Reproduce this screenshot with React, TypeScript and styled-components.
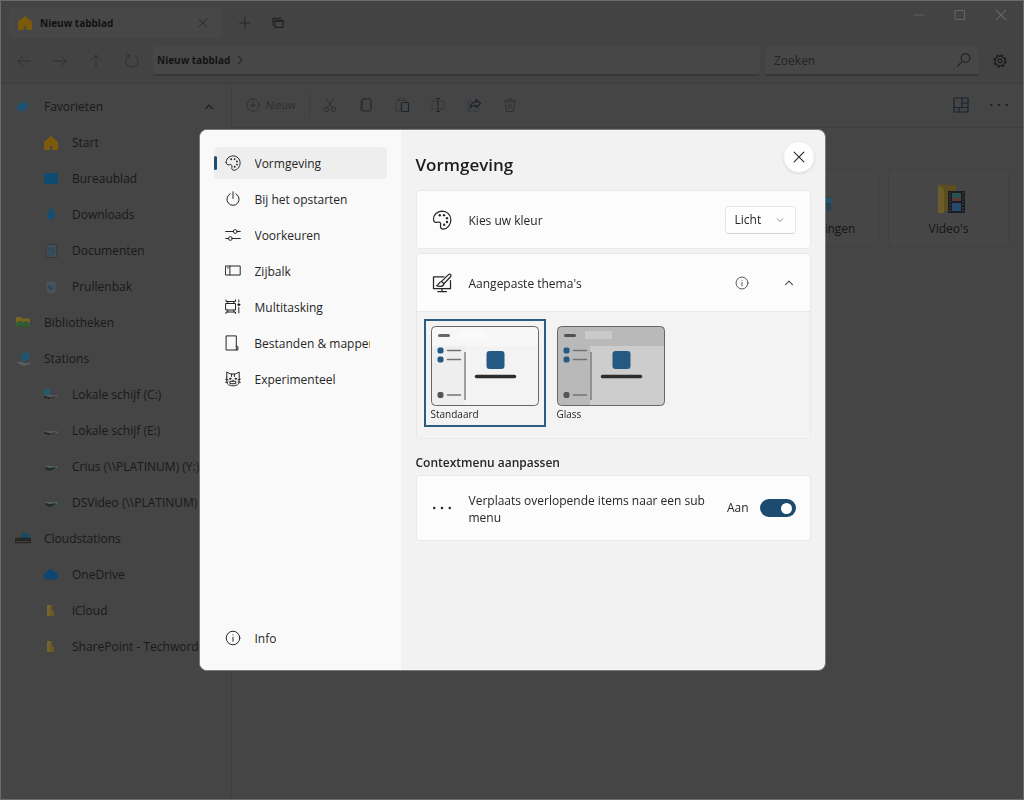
import React, { useState } from "react";
import styled, { createGlobalStyle } from "styled-components";

const GlobalStyle = createGlobalStyle`
  *, *::before, *::after { box-sizing: border-box; }
  body {
    margin: 0;
    background: #434343;
    color: #1c1c1c;
    font: 12px/18px "Open Sans", "Noto Sans", sans-serif;
  }
  button, input, select { font: inherit; color: inherit; }
  button { padding: 0; border: 0; background: none; }
  ul { margin: 0; padding: 0; list-style: none; }
  a { color: inherit; text-decoration: none; }
  svg { display: block; flex: none; }
`;

/* ---------- icons ---------- */

type IconProps = { size?: number; weight?: number; children: React.ReactNode };

const Line = ({ size = 16, weight = 1, children }: IconProps) => (
  <svg width={size} height={size} viewBox="0 0 16 16" fill="none" stroke="currentColor" strokeWidth={weight} strokeLinecap="round" strokeLinejoin="round" aria-hidden="true">
    {children}
  </svg>
);

const Art = ({ size = 16, children }: { size?: number; children: React.ReactNode }) => (
  <svg width={size} height={size} viewBox="0 0 16 16" aria-hidden="true">{children}</svg>
);

const Palette = ({ size }: { size?: number }) => (
  <Line size={size}>
    <path d="M1.2 7.600C.9 4.100 3.900 1 8 .9c4 0 7.100 3 7.100 6.900 0 3.900-2.700 7.400-6 7.400-1.600 0-2.500-.9-2.300-2.400.2-1.100.4-1.900-.1-2.600-.6-.9-1.500-.7-2.600-.4-1.600.4-2.700-.4-2.900-2.200Z" />
    <g fill="currentColor" stroke="none">
      <circle cx="6.200" cy="4.200" r=".95" /><circle cx="9.600" cy="4.100" r=".95" /><circle cx="12" cy="6.500" r=".95" />
      <circle cx="12" cy="9.600" r=".95" /><circle cx="9.700" cy="11.800" r=".95" />
    </g>
  </Line>
);
const Power = () => <Line><path d="M8 .8v6.700M5.200 2.800a6.100 6.100 0 1 0 5.600 0" /></Line>;
const Sliders = () => (
  <Line><path d="M.7 4.500h7.700M12.200 4.500h3.100M.7 11.500h2.800M7.300 11.500h8" /><circle cx="10.300" cy="4.500" r="1.900" /><circle cx="5.400" cy="11.500" r="1.900" /></Line>
);
const SidebarIcon = () => <Line><path d="M.8 3h14.400v9H.8zM4.900 3v9M2.500 4.900h.8" /></Line>;
const Multitask = () => (
  <Line><path d="M1 1v1.500h9.500V1M1 14.500V13h9.500v1.500M1 4.500h9.500v6.500H1zM13.800 1v2M13.800 8.500v5.500M2.800 2.500v2M8.800 2.500v2M2.800 11v2M8.800 11v2" /><circle cx="13.800" cy="5.700" r="1" fill="currentColor" /></Line>
);
const FileIcon = () => <Line><path d="M2.500.9h9.800v9.600l1.600 1.200v3.300H2.500zM12.300 10.500v4.300" /></Line>;
const Cat = () => (
  <Line>
    <path d="M1.800 6V1l3.700 2h5l3.700-2v9.500c0 2.700-2.200 4.300-6.200 4.300s-6.200-1.600-6.200-4.300V6M.7 8.300l2.300.5M.7 11.300l2.300-.3M15.300 8.300l-2.300.5M15.300 11.300l-2.300-.3M6.600 3v2.500M9.400 3v2.500M5.300 10.300h5.400v2.400H5.300zM8 9v1.300" />
    <circle cx="5.200" cy="7.700" r=".7" fill="currentColor" /><circle cx="10.800" cy="7.700" r=".7" fill="currentColor" />
  </Line>
);
const Info = ({ size }: { size?: number }) => <Line size={size}><circle cx="8" cy="8" r="6.800" /><path d="M8 7.300v3.900M8 4.900v.1" /></Line>;
const Close = ({ size = 12 }) => <Line size={size} weight={1.500}><path d="m1.500 1.500 13 13M14.500 1.500l-13 13" /></Line>;
const ChevronUp = ({ size = 10 }) => <Line size={size} weight={1.700}><path d="m2.500 10.500 5.500-5.500 5.500 5.500" /></Line>;
const Gear = () => (
  <Line size={14} weight={1.300}>
    <circle cx="8" cy="8" r="5.600" /><circle cx="8" cy="8" r="2.200" />
    <circle cx="8" cy="8" r="6.700" strokeWidth="1.700" strokeLinecap="butt" strokeDasharray="2.900 2.362" />
  </Line>
);
const Dots = ({ size = 18 }) => (
  <Art size={size}><g fill="currentColor"><circle cx="1.800" cy="8" r="1" /><circle cx="8" cy="8" r="1" /><circle cx="14.200" cy="8" r="1" /></g></Art>
);
const ScreenBrush = () => (
  <Line size={20}><path d="M9.500 3H1.200v9.500h13.600V6M8 12.500v2.300M4.700 14.900h6.800M14.900 1.300c-.7-.7-1.500-.2-2.100.4L7.600 6.700l1.900 1.900 5-5.200c.6-.6 1-1.400.4-2.100ZM7.400 7c-2.400.1-1.500 2.800-3.700 3 1.500 1.200 5.600 1.200 5.800-1.300" /></Line>
);
const House = () => <Art><path d="M8 1 1 6.800V14a1 1 0 0 0 1 1h4.800v-2.800a1.200 1.200 0 0 1 2.400 0V15H14a1 1 0 0 0 1-1V6.800Z" fill="#7b5b0a" /></Art>;
const Star = () => <Art><path d="m10.300 1.200-.1 4.400 4.600 1-4.300 1.900.4 4.600-3.300-2.900-4.800 3.100 1.500-4.800L.9 6.700l4.600-.9Z" fill="#17547a" /><path d="m1.500 4 3 1.500M1.500 10.500l3-1.500" stroke="#17547a" /></Art>;
const Desktop = () => <Art><rect x="1" y="2" width="14" height="11" rx=".8" fill="#0d4b70" /></Art>;
const Download = () => <Art><path d="M5.800 2h4.600v5.400h3L8 13.500 2.700 7.400h3.100Z" fill="#124f78" /></Art>;
const Doc = () => <Art><path d="M4.200 1.500h9.500v13H3V2.700Z" fill="#484d51" stroke="#34393e" /><path d="M5 5h2v3H5zm3 0h4M8.500 7H11v3H8.500zM5 10h2M5 12h6" fill="#24506d" stroke="#294b61" /></Art>;
const Bin = () => <Art><path d="M3 3.500 5 2l2 1 3-1.200 1 1.400 2-.5-1 11.500-7.500.3Z" fill="#4b5358" /><path d="m5 6 3 1-1 2 3-2v4H6l1-1-2-1" fill="#244960" /></Art>;
const Libraries = () => <Art><path d="M1 2h5l1 1.500h8v7H1z" fill="#75671f" /><path d="M2.500 6.500h5.200v6.300H2.500zM8.500 6.500h5v6.300h-5z" fill="#375332" /><path d="M1 8h14v2H1z" fill="#276040" /></Art>;
const Stations = () => <Art><path d="m5 3 8.800-1.700 1.400 7.200-8 2Z" fill="#24546f" /><path d="M.8 11.300 6 10.800l5 1.700 4-1.200v1.400L10 14.700H7.500Z" fill="#5c5e5e" /></Art>;
const Drive = ({ system = false }) => <Art><path d="m1 8.500 5-.4 9 .4v1.400l-8 2.600-6-1.700Z" fill="#575b59" /><path d="m1 8.800 6 1.500v2L1 10.700Z" fill="#222827" /><path d="m7 10.300 5.500-1.200V11L7 12.300Z" fill="#363b39" />{system && <path d="M1 2h6v6H1z" fill="#235c6c" />}</Art>;
const NetDrive = () => <Art><path d="m1 7.500 4.500-.6 9 .3v1.600L8 12l-6-2Z" fill="#566360" /><path d="m1 7.800 6 1.300 5.500-1.100v1.500L7.500 12 3 10.800Z" fill="#202c2a" /></Art>;
const CloudDrive = () => <Art><path d="M7 6.500A3 3 0 0 1 12.300 3 3.200 3.200 0 0 1 14 8.500H7Z" fill="#134b69" /><path d="M0 6.700h16v5.600H0z" fill="#272825" /><path d="M1 10.500h13" stroke="#434232" /></Art>;
const OneDrive = () => <Art><path d="M.7 9.500A3 3 0 0 1 3.300 5.500a5 5 0 0 1 9-.2A3.800 3.800 0 0 1 12.700 12.500H3.500A2.900 2.900 0 0 1 .7 9.500Z" fill="#0d4573" /></Art>;
const FolderIcon = () => <Art><path d="M4 2h5v5l2 1v5H4Z" fill="#6a5a22" /><path d="M4 2h3v11H4Z" fill="#746530" /></Art>;

/* ---------- file window ---------- */

const Window = styled.div`
  display: flex; flex-direction: column; min-height: 100vh;
  border: 1px solid #6b6b6b; background: #434343;
`;
const TabRow = styled.header`display: flex; align-items: center; padding: 7px 16px 0 8px;`;
const Tab = styled.div`
  display: flex; align-items: center; gap: 7px; width: 213px; height: 30px; padding: 0 13px 0 7px;
  border: 1px solid #484848; border-radius: 4px; background: #474747;
  font-size: 10px; font-weight: 700; color: #111;
`;
const TabTitle = styled.span`flex: 1;`;
const TabClose = styled.button`display: grid; place-items: center; color: #2a2a2a;`;
const TabTools = styled.div`display: flex; gap: 19px; margin-left: 16px; flex: 1; color: #222;`;
const WindowTools = styled.div`display: flex; gap: 29px; align-self: flex-start; padding-top: 1px; color: #666;`;
const IconButton = styled.button`display: grid; place-items: center;`;
const NavRow = styled.div`display: flex; align-items: center; padding: 8px 16px 7px 15px; border-bottom: 1px solid #3d3d3d;`;
const History = styled.nav`display: flex; gap: 20px; width: 137px; color: #303030;`;
const Address = styled.div`
  display: flex; align-items: center; gap: 5px; flex: 1; height: 30px; padding: 0 4px;
  border-bottom: 2px solid #383838; border-radius: 4px; background: #474747;
  font-size: 10px; font-weight: 700; color: #141414;
`;
const Search = styled.label`
  display: flex; align-items: center; width: 214px; height: 30px; margin: 0 14px 0 5px; padding: 0 7px 0 9px;
  border-bottom: 2px solid #343434; border-radius: 4px; background: #474747; color: #222;
`;
const SearchInput = styled.input`
  flex: 1; min-width: 0; padding: 2px 0 0; border: 0; outline: 0; background: none;
  &::placeholder { color: #242424; opacity: 1; }
`;
const Columns = styled.div`display: flex; flex: 1; background: #454545;`;
const Sidebar = styled.nav`width: 231px; padding: 5px 17px 0 0; border-right: 1px solid #404040;`;
const SideRow = styled.a<{ $nested?: boolean }>`
  display: flex; align-items: center; gap: 13px; height: 36px;
  padding-left: ${p => (p.$nested ? 42 : 14)}px; color: #191919; white-space: nowrap;
`;
const SideLabel = styled.span`flex: 1; overflow: hidden;`;
const Main = styled.main`flex: 1; min-width: 0;`;
const Toolbar = styled.div`
  display: flex; align-items: center; gap: 20px; height: 44px; padding: 0 14px 2px;
  border-bottom: 1px solid #3f3f3f; color: #1b242d;
`;
const NewButton = styled.button`
  display: flex; align-items: center; gap: 6px; height: 28px; margin-right: -8px; padding-right: 13px;
  border-right: 1px solid #3f3f3f; font-size: 10px; color: #2d2d2d;
`;
const FadedButton = styled(IconButton)`color: #2c3135;`;
const Spacer = styled.span`flex: 1;`;
const Folders = styled.section`display: flex; justify-content: flex-end; gap: 9px; padding: 41px 14px;`;
const FolderCard = styled.a`
  display: flex; flex-direction: column; align-items: center; gap: 3px; width: 121px; height: 78px; padding-top: 13px;
  border: 1px solid #414141; border-radius: 4px; background: #464646; color: #141414;
`;

/* ---------- settings dialog ---------- */

const Backdrop = styled.div`position: fixed; inset: 0; display: grid; place-items: center;`;
const Dialog = styled.section`
  display: flex; width: 627px; max-width: 96vw; min-height: 542px;
  border: 1px solid #7b7b7b; border-radius: 8px; overflow: hidden; background: #f2f2f2; color: #262626;
`;
const Menu = styled.nav`display: flex; flex-direction: column; width: 201px; padding: 17px 14px 16px; background: #f9f9f9;`;
const MenuList = styled.ul`display: flex; flex-direction: column; gap: 4px; flex: 1;`;
const MenuButton = styled.button<{ $active?: boolean }>`
  display: flex; align-items: center; gap: 14px; width: 100%; height: 32px; padding-right: 17px;
  border-radius: 4px; background: ${p => (p.$active ? "#eee" : "transparent")}; text-align: left; white-space: nowrap;
  &::before {
    content: ""; width: 3px; height: 14px; margin-right: -6px; border-radius: 2px;
    background: ${p => (p.$active ? "#1d4f76" : "transparent")};
  }
`;
const MenuText = styled.span`overflow: hidden; padding-top: 2px;`;
const Panel = styled.div`flex: 1; min-width: 0; padding: 11px 14px 14px 15px;`;
const PanelHead = styled.header`display: flex; align-items: flex-start; justify-content: space-between; margin-right: -4px;`;
const Title = styled.h1`margin: 12px 0 0; font-size: 17px; line-height: 24px; font-weight: 600; color: #1d1d1d;`;
const CloseButton = styled.button`
  display: grid; place-items: center; width: 32px; height: 32px; border: 1px solid #ececec; border-radius: 50%;
  background: #fefefe; box-shadow: 0 1px 2px #0000001a;
`;
const Card = styled.section`margin-top: 4px; border: 1px solid #e9e9e9; border-radius: 4px; background: #fcfcfc;`;
const FirstCard = styled(Card)`margin-top: 13px;`;
const CardRow = styled.div<{ $tall?: boolean }>`
  display: flex; align-items: center; min-height: ${p => (p.$tall ? 64 : 57)}px; padding: 0 14px 0 15px;
`;
const CardLabel = styled.label`flex: 1; padding: 2px 0 0 17px; line-height: 17px;`;
const SelectBox = styled.div`position: relative; display: flex;`;
const Select = styled.select`
  appearance: none; width: 71px; height: 28px; padding: 0 9px; border: 1px solid #e7e7e7; border-bottom-color: #d4d4d4;
  border-radius: 4px; background: #fefefe;
`;
const SelectArrow = styled.span`position: absolute; right: 12px; top: 10px; pointer-events: none; transform: rotate(180deg); color: #777;`;
const HeadTools = styled.div`display: flex; align-items: center; gap: 35px; padding-right: 2px; color: #444;`;
const Themes = styled.div`display: flex; gap: 4px; padding: 7px 7px 11px; border-top: 1px solid #e8e8e8; border-radius: 0 0 4px 4px; background: #f3f3f3;`;
const ThemeOption = styled.label<{ $active: boolean }>`
  position: relative; width: 122px; padding: 5px 5px 3px; border: 2px solid ${p => (p.$active ? "#2c5c80" : "transparent")};
  font-size: 10px; line-height: 16px;
`;
const HiddenRadio = styled.input`position: absolute; opacity: 0; margin: 0;`;
const Section = styled.h2`margin: 16px 0 0; font-size: 12px; line-height: 16px; font-weight: 600;`;
const Switch = styled.input`
  appearance: none; display: flex; align-items: center; justify-content: flex-end; width: 36px; height: 18px;
  margin: 0 0 0 11px; padding-right: 4px; border-radius: 9px; background: #1c4b70;
  &::before { content: ""; width: 11px; height: 11px; border-radius: 50%; background: #fff; }
  &:not(:checked) { justify-content: flex-start; padding-left: 4px; background: #8a8a8a; }
`;

const ThemePreview = ({ glass = false }) => (
  <svg width="108" height="80" viewBox="0 0 108 80" aria-hidden="true">
    <rect x=".5" y=".5" width="107" height="79" rx="4" fill={glass ? "#b9b9ba" : "#f3f3f3"} />
    {glass ? <path d="M33 20h74.500v55.500a4 4 0 0 1-4 4H33Z" fill="#cdcdcd" /> : <path d="M1 20V4.500a4 4 0 0 1 4-4h98a4 4 0 0 1 4 4V20Z" fill="#f7f7f7" />}
    {!glass && <path d="M1 20h33v59H5a4 4 0 0 1-4-4Z" fill="#eee" />}
    <rect x="28" y="5" width="27" height="8" rx="1" fill={glass ? "#cacaca" : "#fafafa"} />
    <path d="M8.500 9.500h9" stroke={glass ? "#515151" : "#666"} strokeWidth="3" strokeLinecap="round" />
    <path d="M16.500 24.500h13M16.500 33.500h13M16.500 69h13" stroke="#737373" strokeWidth="1.500" strokeLinecap="round" />
    <rect x="6.500" y="21.500" width="6" height="6" rx="2" fill="#245982" />
    <rect x="6.500" y="30.500" width="6" height="6" rx="2" fill="#245982" />
    <rect x="6.500" y="66" width="6" height="6" rx="2" fill="#555" />
    <path d="M34 26v48" stroke="#696969" strokeWidth="1.200" />
    <rect x="55.500" y="25" width="18" height="18" rx="3" fill="#235982" />
    <path d="M45.500 50.500h38" stroke="#2d2d2d" strokeWidth="3.500" strokeLinecap="round" />
    <rect x=".5" y=".5" width="107" height="79" rx="4" fill="none" stroke="#666" />
  </svg>
);

const places: [string, React.ReactNode, boolean][] = [
  ["Favorieten", <Star />, false],
  ["Start", <House />, true],
  ["Bureaublad", <Desktop />, true],
  ["Downloads", <Download />, true],
  ["Documenten", <Doc />, true],
  ["Prullenbak", <Bin />, true],
  ["Bibliotheken", <Libraries />, false],
  ["Stations", <Stations />, false],
  ["Lokale schijf (C:)", <Drive system />, true],
  ["Lokale schijf (E:)", <Drive />, true],
  ["Crius (\\\\PLATINUM) (Y:)", <NetDrive />, true],
  ["DSVideo (\\\\PLATINUM)", <NetDrive />, true],
  ["Cloudstations", <CloudDrive />, false],
  ["OneDrive", <OneDrive />, true],
  ["iCloud", <FolderIcon />, true],
  ["SharePoint - Techword", <FolderIcon />, true],
];

const pages: [string, React.ReactNode][] = [
  ["Vormgeving", <Palette />],
  ["Bij het opstarten", <Power />],
  ["Voorkeuren", <Sliders />],
  ["Zijbalk", <SidebarIcon />],
  ["Multitasking", <Multitask />],
  ["Bestanden & mappen", <FileIcon />],
  ["Experimenteel", <Cat />],
];

export default function App() {
  const [theme, setTheme] = useState("Standaard");
  const [submenu, setSubmenu] = useState(true);

  return (
    <>
      <GlobalStyle />
      <Window>
        <TabRow>
          <Tab>
            <House />
            <TabTitle>Nieuw tabblad</TabTitle>
            <TabClose aria-label="Tabblad sluiten"><Close size={10} /></TabClose>
          </Tab>
          <TabTools>
            <IconButton aria-label="Tabblad toevoegen"><Line size={14}><path d="M8 2v12M2 8h12" /></Line></IconButton>
            <IconButton aria-label="Tabbladen">
              <Line size={14} weight={1.400}><path d="M4.500 5h9.300v8H4.500zM4.500 6.200h9.300M2.300 10.500V2.700h9" /></Line>
            </IconButton>
          </TabTools>
          <WindowTools>
            <IconButton aria-label="Minimaliseren"><Line size={12}><path d="M1 8h14" /></Line></IconButton>
            <IconButton aria-label="Maximaliseren"><Line size={12} weight={1.300}><path d="M2 2h12v12H2z" /></Line></IconButton>
            <IconButton aria-label="Sluiten"><Close size={12} /></IconButton>
          </WindowTools>
        </TabRow>
        <NavRow>
          <History>
            <IconButton aria-label="Terug"><Line><path d="M14 8H2M7 3 2 8l5 5" /></Line></IconButton>
            <IconButton aria-label="Vooruit"><Line><path d="M2 8h12M9 3l5 5-5 5" /></Line></IconButton>
            <IconButton aria-label="Omhoog"><Line><path d="M8 14V2M3 7l5-5 5 5" /></Line></IconButton>
            <IconButton aria-label="Vernieuwen"><Line><path d="M4.500 2.800a6.200 6.200 0 1 0 6.800 0M2.800 2h2.700v2.800" /></Line></IconButton>
          </History>
          <Address>
            Nieuw tabblad
            <Line size={10} weight={1.500}><path d="m5 1.500 6.500 6.500L5 14.500" /></Line>
          </Address>
          <Search>
            <SearchInput placeholder="Zoeken" aria-label="Zoeken" />
            <Line weight={1.200}><circle cx="9.500" cy="6" r="4.300" /><path d="m6.300 9.300-4.800 4.800" /></Line>
          </Search>
          <IconButton aria-label="Instellingen"><Gear /></IconButton>
        </NavRow>
        <Columns>
          <Sidebar aria-label="Locaties">
            {places.map(([name, icon, nested]) => (
              <SideRow key={name} href="#" $nested={nested}>
                {icon}
                <SideLabel>{name}</SideLabel>
                {name === "Favorieten" && <ChevronUp />}
              </SideRow>
            ))}
          </Sidebar>
          <Main>
            <Toolbar>
              <NewButton><Line size={14}><circle cx="8" cy="8" r="7" /><path d="M8 5v6M5 8h6" /></Line>Nieuw</NewButton>
              <FadedButton aria-label="Knippen"><Line><path d="m4 1.500 6.300 9M12 1.500l-6.300 9" /><circle cx="4.300" cy="12.300" r="2.200" /><circle cx="11.700" cy="12.300" r="2.200" /></Line></FadedButton>
              <IconButton aria-label="Kopiëren"><Line><rect x="4" y="2" width="9" height="12" rx="1.500" /><path d="M3 4v10" opacity=".5" /></Line></IconButton>
              <IconButton aria-label="Plakken"><Line><path d="M6 14H2V3h3M10 3h2v2M5 1.500h5v2H5z" opacity=".4" /><rect x="7.500" y="5.500" width="7" height="9" rx="1" strokeWidth="1.200" /></Line></IconButton>
              <IconButton aria-label="Naam wijzigen"><Line><path d="M6 4H2v8h4M10 4h4v8h-4" opacity=".4" /><path d="M8 1.500v13M6.500 1.500h3M6.500 14.500h3" /></Line></IconButton>
              <IconButton aria-label="Delen"><Line><path d="M5 4H2v10h11v-3" opacity=".4" /><path d="M10 2.500 14.500 6.500 10 10.500V8.300C7 8.200 5.300 9 4 11c.2-3.500 2.500-6 6-6.200Z" strokeWidth="1.300" /></Line></IconButton>
              <FadedButton aria-label="Verwijderen"><Line><path d="M2.500 4h11M3.500 4l.8 10.500h7.400L12.500 4M6 4V2h4v2M7 7v4.500M9 7v4.500" /></Line></FadedButton>
              <Spacer />
              <IconButton aria-label="Indeling"><Line weight={1.200}><path d="M1 1h14v14H1zM9 1v10M1 10.500h14M9 6h6M6 10.500V15" /></Line></IconButton>
              <IconButton aria-label="Meer"><Dots size={20} /></IconButton>
            </Toolbar>
            <Folders>
              <FolderCard href="#">
                <svg width="34" height="34" viewBox="0 0 34 34" aria-hidden="true"><path d="M4 6h13v24H4z" fill="#655720" /><path d="M12 14h17v14H12z" fill="#29434e" /><path d="M12 15h17v5H12z" fill="#235273" /></svg>
                Afbeeldingen
              </FolderCard>
              <FolderCard href="#">
                <svg width="34" height="34" viewBox="0 0 34 34" aria-hidden="true">
                  <path d="M6 2h18v26H12l-6 2z" fill="#5c4f1f" /><path d="m6 2 6 4v24H6z" fill="#6a5d2a" />
                  <path d="M16 8h17v22H16z" fill="#1c1d22" /><path d="M20 10h9v8h-9z" fill="#285151" /><path d="M20 15h9v3h-9z" fill="#623630" /><path d="M20 20h9v8h-9z" fill="#26496c" />
                  <path d="M18 9v20M31 9v20" stroke="#484b4c" strokeDasharray="1.500 1.500" />
                </svg>
                Video's
              </FolderCard>
            </Folders>
          </Main>
        </Columns>
      </Window>

      <Backdrop>
        <Dialog role="dialog" aria-modal="true" aria-labelledby="page-title">
          <Menu aria-label="Instellingen">
            <MenuList>
              {pages.map(([name, icon], i) => (
                <li key={name}><MenuButton $active={i === 0}>{icon}<MenuText>{name}</MenuText></MenuButton></li>
              ))}
            </MenuList>
            <MenuButton><Info /><MenuText>Info</MenuText></MenuButton>
          </Menu>
          <Panel>
            <PanelHead>
              <Title id="page-title">Vormgeving</Title>
              <CloseButton aria-label="Sluiten"><Close /></CloseButton>
            </PanelHead>
            <FirstCard>
              <CardRow>
                <Palette size={20} />
                <CardLabel htmlFor="color">Kies uw kleur</CardLabel>
                <SelectBox>
                  <Select id="color" defaultValue="Licht"><option>Licht</option></Select>
                  <SelectArrow><ChevronUp size={8} /></SelectArrow>
                </SelectBox>
              </CardRow>
            </FirstCard>
            <Card>
              <CardRow>
                <ScreenBrush />
                <CardLabel as="span">Aangepaste thema's</CardLabel>
                <HeadTools>
                  <IconButton aria-label="Informatie"><Info size={14} /></IconButton>
                  <IconButton aria-label="Inklappen"><ChevronUp /></IconButton>
                </HeadTools>
              </CardRow>
              <Themes>
                {["Standaard", "Glass"].map(name => (
                  <ThemeOption key={name} $active={theme === name}>
                    <HiddenRadio type="radio" name="theme" checked={theme === name} onChange={() => setTheme(name)} />
                    <ThemePreview glass={name === "Glass"} />
                    {name}
                  </ThemeOption>
                ))}
              </Themes>
            </Card>
            <Section>Contextmenu aanpassen</Section>
            <Card>
              <CardRow $tall>
                <Dots size={20} />
                <CardLabel htmlFor="submenu">Verplaats overlopende items naar een sub menu</CardLabel>
                <span>Aan</span>
                <Switch id="submenu" type="checkbox" role="switch" checked={submenu} onChange={() => setSubmenu(!submenu)} />
              </CardRow>
            </Card>
          </Panel>
        </Dialog>
      </Backdrop>
    </>
  );
}
